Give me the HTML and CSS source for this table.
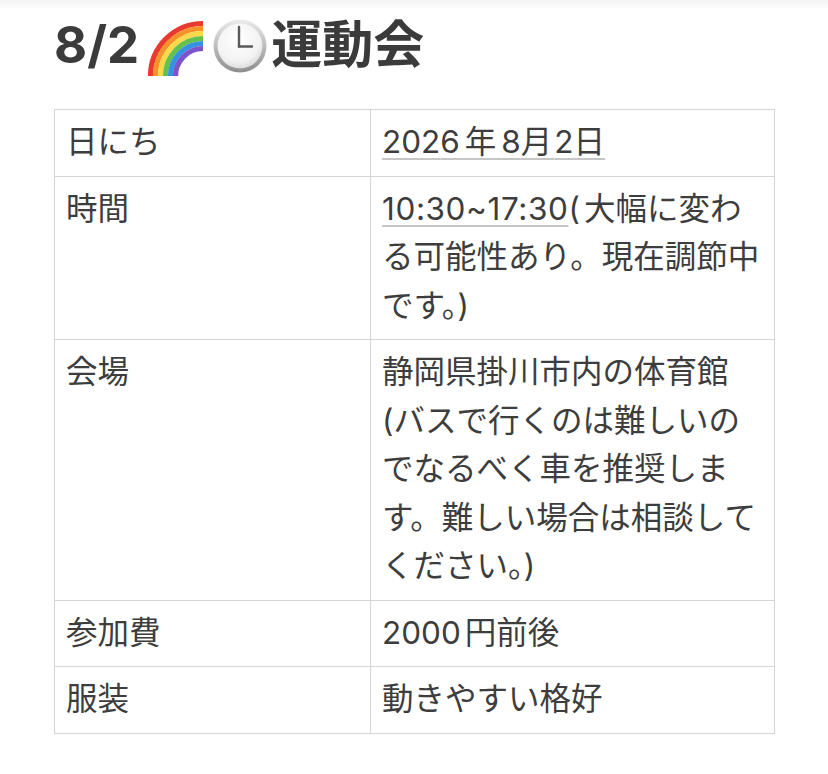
FILE: index.html
```html
<!DOCTYPE html>
<html lang="ja">
<head>
<meta charset="utf-8">
<title>8/2 運動会</title>
<link rel="stylesheet" href="styles.css">
</head>
<body>
<div class="topshade"></div>
<main class="page">
  <h1 class="title">8/2<svg class="emoji rainbow" viewBox="0 0 56 58" width="56" height="58" aria-hidden="true">
      <g fill="none" stroke-width="5.2">
        <path d="M3.5 58 A52.5 52.5 0 0 1 56 5.5" stroke="#e83a2f"/>
        <path d="M8.5 58 A47.5 47.5 0 0 1 56 10.5" stroke="#f6922a"/>
        <path d="M13.5 58 A42.5 42.5 0 0 1 56 15.5" stroke="#fcd94c"/>
        <path d="M18.5 58 A37.5 37.5 0 0 1 56 20.5" stroke="#62c14f"/>
        <path d="M23.5 58 A32.5 32.5 0 0 1 56 25.5" stroke="#3592e2"/>
        <path d="M28.5 58 A27.5 27.5 0 0 1 56 30.5" stroke="#7c53c9"/>
      </g>
    </svg><svg class="emoji clock" viewBox="0 0 54 54" width="54" height="54" aria-hidden="true">
      <defs>
        <linearGradient id="rim" x1="0" y1="0" x2="0" y2="1">
          <stop offset="0" stop-color="#ececec"/>
          <stop offset="0.5" stop-color="#bcbcbc"/>
          <stop offset="1" stop-color="#8e8e8e"/>
        </linearGradient>
        <radialGradient id="face" cx="0.45" cy="0.35" r="0.7">
          <stop offset="0" stop-color="#ffffff"/>
          <stop offset="0.7" stop-color="#f3f3f3"/>
          <stop offset="1" stop-color="#d6d6d6"/>
        </radialGradient>
      </defs>
      <circle cx="27" cy="27" r="26.5" fill="url(#rim)"/>
      <circle cx="27" cy="27" r="22.5" fill="url(#face)"/>
      <g stroke="#5a5a5a" stroke-width="2.4" stroke-linecap="round">
        <line x1="26" y1="27.5" x2="26" y2="8"/>
        <line x1="26" y1="27.5" x2="39" y2="27.5"/>
      </g>
    </svg>運動会</h1>

  <table class="info">
    <colgroup>
      <col class="col-key">
      <col class="col-val">
    </colgroup>
    <tbody>
      <tr>
        <td>日にち</td>
        <td><span class="detected">202<span class="sp">6年</span>8<span class="sp-s">月</span>2日</span></td>
      </tr>
      <tr>
        <td>時間</td>
        <td><span class="detected time">10:30~17:30</span><span class="paren">(</span>大幅に変わる可能性あり。現在調節中です。)</td>
      </tr>
      <tr>
        <td>会場</td>
        <td>静岡県掛川市内の体育館 (バスで行くのは難しいのでなるべく車を推奨します。難しい場合は相談してください。)</td>
      </tr>
      <tr>
        <td>参加費</td>
        <td>200<span class="sp-m">0</span>円前後</td>
      </tr>
      <tr>
        <td>服装</td>
        <td>動きやすい格好</td>
      </tr>
    </tbody>
  </table>
</main>
</body>
</html>
```

FILE: styles.css
```css
html, body {
  margin: 0;
  padding: 0;
  background: #ffffff;
}

body {
  font-family: Inter, "Noto Sans CJK JP", sans-serif;
  color: #3d3d3d;
  position: relative;
}

.topshade {
  position: absolute;
  left: 0;
  top: 0;
  width: 100%;
  height: 10px;
  background: linear-gradient(to bottom, #f4f4f4, rgba(255, 255, 255, 0));
}

.page {
  padding: 15px 0 0 54px;
}

.title {
  margin: 0 0 33px 0;
  font-size: 51px;
  line-height: 60px;
  font-weight: 700;
  color: #3b3b3b;
  white-space: nowrap;
}

.emoji {
  display: inline-block;
}

.rainbow {
  margin-left: 8px;
  vertical-align: -13px;
}

.clock {
  margin-left: 10px;
  margin-right: 4px;
  vertical-align: -10px;
}

.info {
  border-collapse: collapse;
  table-layout: fixed;
  width: 720px;
  font-size: 31.5px;
  line-height: 48.5px;
  color: #3d3d3d;
}

.col-key {
  width: 316px;
}

.col-val {
  width: 404px;
}

.info td {
  border: 1px solid #d5d5d5;
  padding: 8px 11px 9px 11px;
  vertical-align: top;
}

.detected {
  text-decoration: underline;
  text-decoration-color: #c6c6c6;
  text-decoration-thickness: 2px;
  text-underline-offset: 5px;
}

.time {
  letter-spacing: 0.6px;
}

.paren {
  letter-spacing: 4px;
}

.sp {
  letter-spacing: 5px;
}

.sp-s {
  letter-spacing: 2px;
}

.sp-m {
  letter-spacing: 4px;
}
```
